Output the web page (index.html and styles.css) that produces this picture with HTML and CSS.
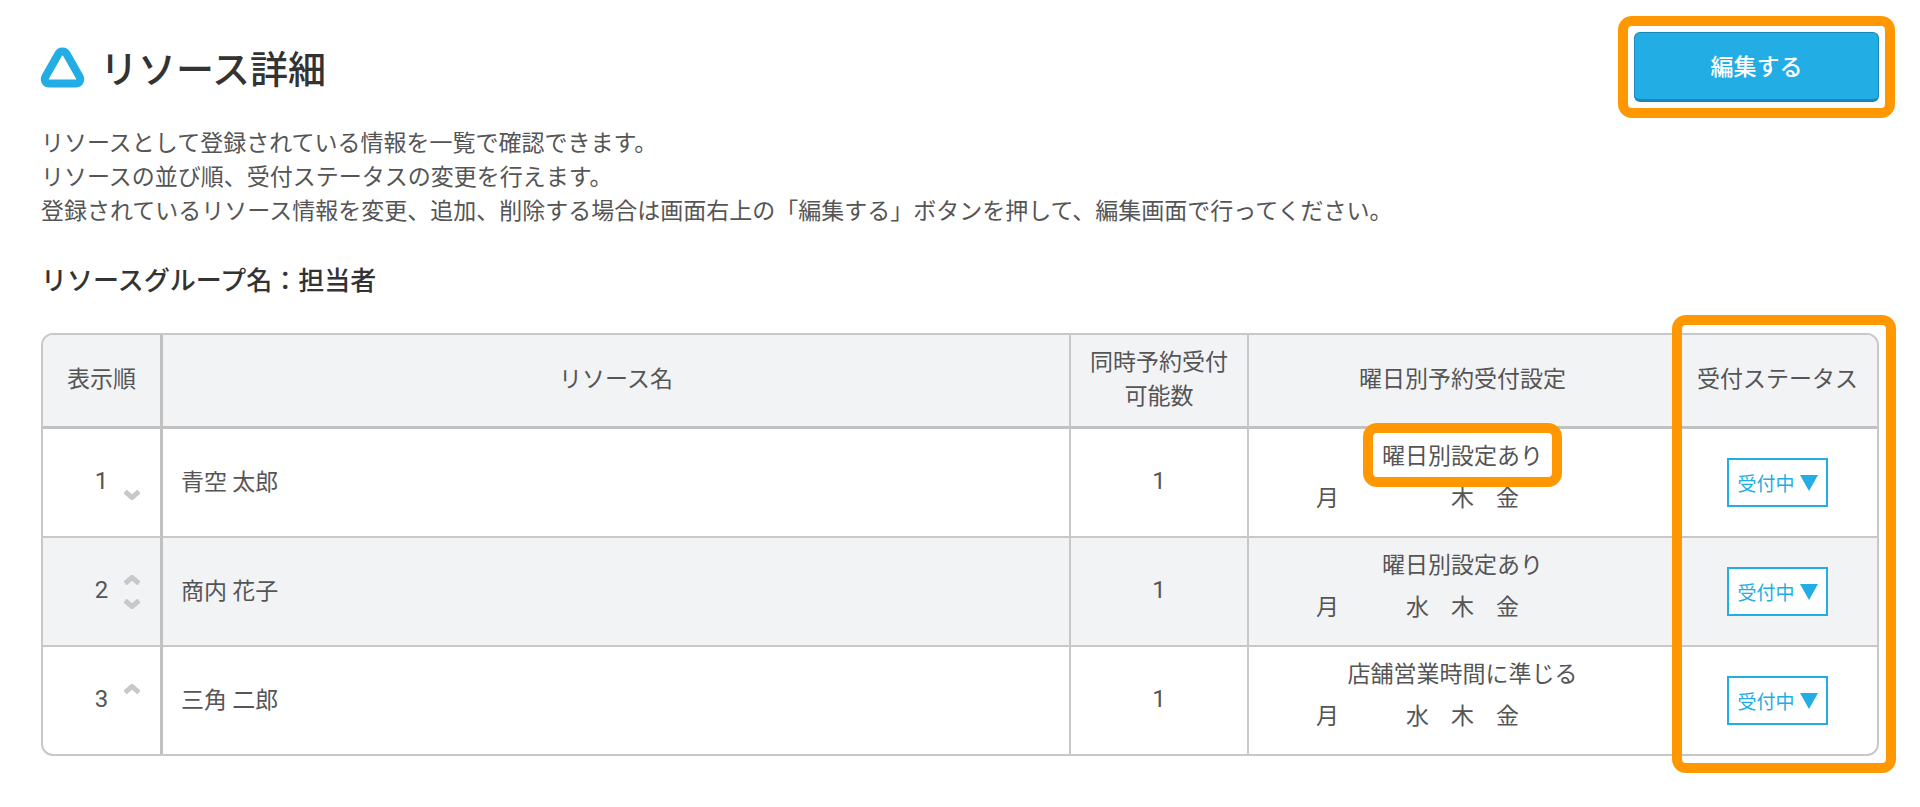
FILE: index.html
```html
<!DOCTYPE html>
<html lang="ja">
<head>
<meta charset="utf-8">
<meta name="viewport" content="width=device-width, initial-scale=1">
<title>リソース詳細</title>
<link rel="stylesheet" href="styles.css">
</head>
<body>
<main class="page">
  <header class="page-header">
    <h1 class="page-title">
      <svg class="logo" viewBox="0 0 43 39" aria-hidden="true"><path d="M21.500 3.500 C23.500 3.500 24.900 4.500 25.800 6.300 L38.300 28.200 C40.400 32 38.500 35.500 34.500 35.500 L8.500 35.500 C4.500 35.500 2.600 32 4.700 28.200 L17.200 6.300 C18.100 4.500 19.500 3.500 21.500 3.500 Z"/></svg>
      リソース詳細
    </h1>
    <div class="edit-area"><button class="edit-button" type="button">編集する</button></div>
  </header>

  <p class="description">リソースとして登録されている情報を一覧で確認できます。<br>リソースの並び順、受付ステータスの変更を行えます。<br>登録されているリソース情報を変更、追加、削除する場合は画面右上の「編集する」ボタンを押して、編集画面で行ってください。</p>

  <h2 class="group-name">リソースグループ名：担当者</h2>

  <div class="table-area">
    <table class="resources">
      <colgroup>
        <col class="col-order"><col><col class="col-capacity"><col class="col-days"><col class="col-status">
      </colgroup>
      <thead>
        <tr>
          <th scope="col">表示順</th>
          <th scope="col">リソース名</th>
          <th scope="col">同時予約受付<br>可能数</th>
          <th scope="col">曜日別予約受付設定</th>
          <th scope="col">受付ステータス</th>
        </tr>
      </thead>
      <tbody>
        <tr>
          <td><div class="order"><span class="number">1</span><span class="arrows">
            <button class="arrow down" type="button" aria-label="下へ"><svg viewBox="0 0 16 10"><path d="M1 1.500 L8 7.500 L15 1.500"/></svg></button></span></div></td>
          <td class="name">青空 太郎</td>
          <td class="number">1</td>
          <td class="days"><span class="setting marked">曜日別設定あり</span>
            <div class="week"><span class="mon">月</span><span class="thu">木</span><span class="fri">金</span></div></td>
          <td><button class="status" type="button">受付中<svg viewBox="0 0 18 16"><path d="M0 0H18L9 16Z"/></svg></button></td>
        </tr>
        <tr>
          <td><div class="order"><span class="number">2</span><span class="arrows">
            <button class="arrow up" type="button" aria-label="上へ"><svg viewBox="0 0 16 10"><path d="M1 8.500 L8 2.500 L15 8.500"/></svg></button>
            <button class="arrow down" type="button" aria-label="下へ"><svg viewBox="0 0 16 10"><path d="M1 1.500 L8 7.500 L15 1.500"/></svg></button></span></div></td>
          <td class="name">商内 花子</td>
          <td class="number">1</td>
          <td class="days"><span class="setting">曜日別設定あり</span>
            <div class="week"><span class="mon">月</span><span class="wed">水</span><span class="thu">木</span><span class="fri">金</span></div></td>
          <td><button class="status" type="button">受付中<svg viewBox="0 0 18 16"><path d="M0 0H18L9 16Z"/></svg></button></td>
        </tr>
        <tr>
          <td><div class="order"><span class="number">3</span><span class="arrows">
            <button class="arrow up" type="button" aria-label="上へ"><svg viewBox="0 0 16 10"><path d="M1 8.500 L8 2.500 L15 8.500"/></svg></button></span></div></td>
          <td class="name">三角 二郎</td>
          <td class="number">1</td>
          <td class="days"><span class="setting">店舗営業時間に準じる</span>
            <div class="week"><span class="mon">月</span><span class="wed">水</span><span class="thu">木</span><span class="fri">金</span></div></td>
          <td><button class="status" type="button">受付中<svg viewBox="0 0 18 16"><path d="M0 0H18L9 16Z"/></svg></button></td>
        </tr>
      </tbody>
    </table>
  </div>
</main>
</body>
</html>
```

FILE: styles.css
```css
*, *::after { box-sizing: border-box; }

body {
  margin: 0;
  background: #fff;
  color: #555;
  font: 23px/34px "Noto Sans CJK JP", sans-serif;
}

button {
  margin: 0;
  padding: 0;
  border: 0;
  background: none;
  color: inherit;
  font: inherit;
  cursor: pointer;
}

.page { padding: 32px 41px 48px; }

.page-header {
  display: flex;
  justify-content: space-between;
  align-items: center;
}

.page-title {
  display: flex;
  align-items: center;
  gap: 16px;
  margin: 0;
  color: #333;
  font-size: 38px;
  font-weight: 500;
  line-height: 56px;
}

.logo {
  width: 43px;
  height: 39px;
  overflow: visible;
}

.logo path {
  fill: none;
  stroke: #23ade5;
  stroke-width: 8;
}

.edit-area { position: relative; }

.edit-button {
  display: block;
  width: 245px;
  height: 70px;
  padding-bottom: 2px;
  border: 1px solid #1b87b8;
  border-bottom-width: 3px;
  border-radius: 6px;
  background: #23ade5;
  color: #fff;
  font-weight: 500;
}

/* Orange call-out frames */
.edit-area::after,
.table-area::after,
.marked::after {
  content: "";
  position: absolute;
  inset: -16px;
  border: 10px solid #ff9800;
  border-radius: 14px;
  pointer-events: none;
}

.description { margin: 22px 0 0; }

.group-name {
  margin: 36px 0 0;
  color: #333;
  font-size: 26px;
  font-weight: 500;
  line-height: 34px;
}

.table-area {
  position: relative;
  margin-top: 37px;
}

.table-area::after {
  inset: -18px -17px -17px auto;
  width: 224px;
}

.resources {
  width: 100%;
  table-layout: fixed;
  border: 2px solid #c8c8c8;
  border-radius: 12px;
  border-collapse: separate;
  border-spacing: 0;
  overflow: hidden;
  text-align: center;
}

.col-order { width: 120px; }
.col-capacity { width: 178px; }
.col-days { width: 429px; }
.col-status { width: 199px; }

th, td {
  padding: 0;
  border-right: 2px solid #c8c8c8;
  border-bottom: 2px solid #c8c8c8;
}

th {
  height: 94px;
  padding-bottom: 8px;
  border-bottom: 3px solid #c1c1c1;
  background: #f2f3f5;
  font-weight: 400;
}

td { height: 109px; }

th:first-child, td:first-child { border-right: 3px solid #c1c1c1; }
th:last-child, td:last-child { border-right: 0; }
tbody tr:last-child td { height: 107px; border-bottom: 0; }
tbody tr:nth-child(even) { background: #f2f3f5; }

.number {
  font-family: Roboto, sans-serif;
  font-size: 24px;
}

td.number { padding-bottom: 4px; }

.order {
  display: grid;
  grid-template-columns: 1fr auto 1fr;
  align-items: center;
}

.order .number {
  grid-column: 2;
  padding-bottom: 4px;
}

.arrows {
  display: grid;
  grid-template-rows: 10px 10px;
  gap: 14px;
  padding-left: 16px;
}

.arrow { width: 16px; height: 10px; }
.arrow.up { grid-row: 1; }
.arrow.down { grid-row: 2; }
.arrow svg { display: block; }

.arrow path {
  fill: none;
  stroke: #c8c8c8;
  stroke-width: 5;
}

.name {
  padding: 0 0 6px 18px;
  text-align: left;
}

.days { padding-bottom: 16px; }

.setting {
  display: inline-block;
  position: relative;
}

.marked::after { inset: -14px -19px -16px; }

.week {
  display: grid;
  grid-template-columns: repeat(7, 45px);
  justify-content: center;
  margin-top: 8px;
}

.mon { grid-column: 1; }
.wed { grid-column: 3; }
.thu { grid-column: 4; }
.fri { grid-column: 5; }

.status {
  display: inline-flex;
  align-items: center;
  justify-content: center;
  gap: 5px;
  width: 101px;
  height: 49px;
  border: 2px solid #23ade5;
  background: #fff;
  color: #23ade5;
  font-size: 19px;
  vertical-align: middle;
}

.status svg {
  width: 18px;
  height: 16px;
  fill: currentColor;
}
```
